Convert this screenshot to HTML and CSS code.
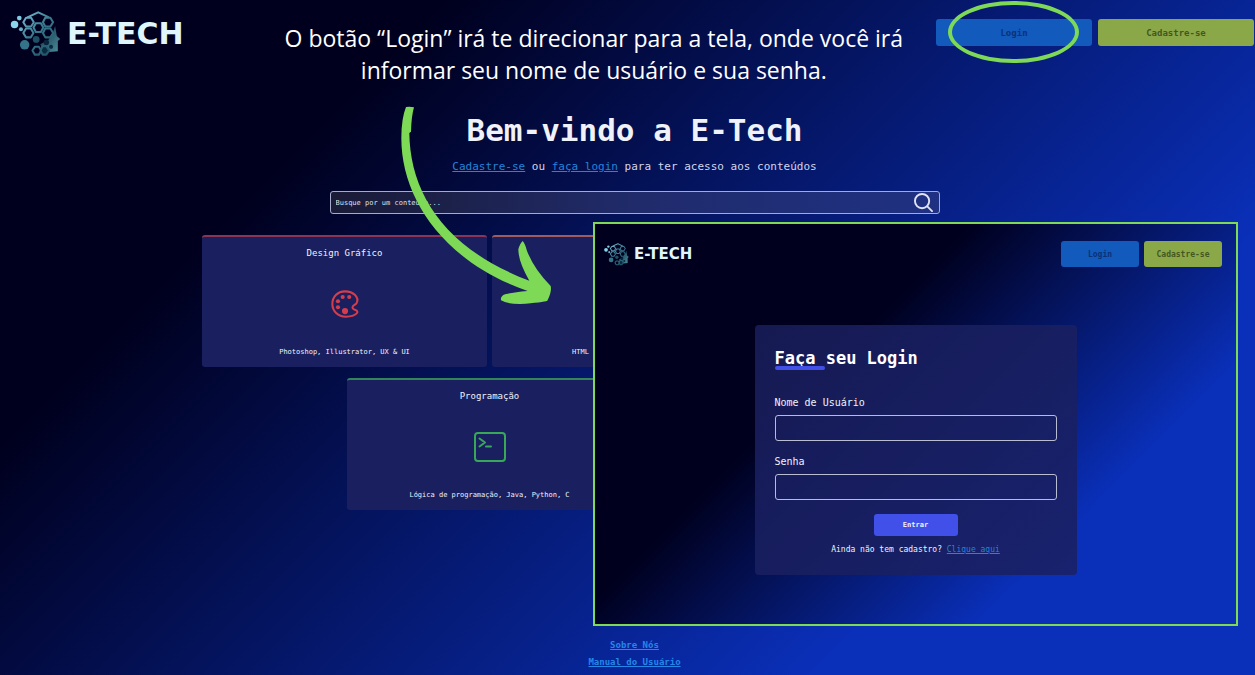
FILE: index.html
```html
<!DOCTYPE html>
<html lang="pt-BR">
<head>
<meta charset="utf-8">
<title>E-Tech</title>
<link rel="stylesheet" href="styles.css">
</head>
<body>
<svg class="defs" width="0" height="0" aria-hidden="true">
  <defs>
    <linearGradient id="teal" gradientUnits="userSpaceOnUse" x1="40" y1="30" x2="150" y2="140">
      <stop offset="0" stop-color="#7cc4dc"/><stop offset=".45" stop-color="#3b7b90"/><stop offset="1" stop-color="#1d5064"/>
    </linearGradient>
    <linearGradient id="face" x1="0" y1="0" x2="1" y2="1">
      <stop offset="0" stop-color="#0b2b40"/><stop offset="1" stop-color="#4f92a0"/>
    </linearGradient>
    <symbol id="brain" viewBox="16 18 148 136">
      <path d="M148 62L153 92L163 101L156 107L156 137L116 141L104 116L128 104L140 86Z" fill="url(#face)"/>
      <circle cx="122" cy="111" r="8" fill="#08233a"/>
      <circle cx="136" cy="124" r="6" fill="#0b2b40"/>
      <circle cx="28" cy="58" r="11" fill="#8bd6ec"/>
      <circle cx="42" cy="39" r="7" fill="#7fcbe2"/>
      <circle cx="47" cy="72" r="6" fill="#68aec4"/>
      <circle cx="58" cy="118" r="14" fill="#34748a"/>
      <circle cx="92" cy="102" r="10" fill="#1d5064"/>
      <g fill="none" stroke="url(#teal)" stroke-width="6" stroke-linejoin="round">
        <path d="M62 38H77L85 51L77 64H62L54 51Z"/>
        <path d="M91 54H106L113 67L106 80H91L84 67Z"/>
        <path d="M119 38H134L142 51L134 64H119L112 51Z"/>
        <path d="M62 70H76L84 83L76 96H62L54 83Z"/>
        <path d="M119 70H134L142 83L134 96H119L112 83Z"/>
        <path d="M66 37L98 22L130 37"/>
        <path d="M88 124H100L107 135L100 147H88L81 135Z"/>
        <path d="M111 122H122L130 135L122 147H111L105 135Z" fill="#0b2b40"/>
      </g>
    </symbol>
  </defs>
</svg>

<div class="page">
  <header class="header">
    <a class="logo" href="#"><svg class="logo-icon" aria-hidden="true"><use href="#brain"/></svg>E-TECH</a>
    <p class="note">O botão “Login” irá te direcionar para a tela, onde você irá informar seu nome de usuário e sua senha.</p>
    <nav class="actions">
      <div class="spot"><button class="btn btn-blue" type="button">Login</button><span class="ring"></span></div>
      <button class="btn btn-green" type="button">Cadastre-se</button>
    </nav>
  </header>

  <main class="main">
    <h1 class="title">Bem-vindo a E-Tech</h1>
    <p class="lead"><a href="#">Cadastre-se</a> ou <a href="#">faça login</a> para ter acesso aos conteúdos</p>
    <form class="search">
      <input class="search-input" type="text" placeholder="Busque por um conteúdo..." aria-label="Busque por um conteúdo">
      <svg class="search-icon" viewBox="0 0 20 20" aria-hidden="true"><circle cx="8.500" cy="8.500" r="7.500"/><path d="M14 14L19 19"/></svg>
    </form>
    <section class="cards">
      <article class="card red">
        <h2>Design Gráfico</h2>
        <svg class="card-icon" viewBox="0 0 32 32" aria-hidden="true">
          <path d="M16 2.500C8 2.500 2.500 8.500 2.500 16S8.500 29.500 17 29.500c5 0 9-1 11.500-3.500 1.500-1.500.5-3-1.500-3.600-2.600-.8-3.600-2.200-2.600-4 .8-1.400 3-1.600 4-3.400C31.500 9 25 2.500 16 2.500Z" fill="none" stroke="currentColor" stroke-width="2.200"/>
          <g fill="currentColor"><circle cx="13.500" cy="8.500" r="2.200"/><circle cx="20.500" cy="8.500" r="2.200"/><circle cx="8.500" cy="13" r="2.200"/><circle cx="8.500" cy="19.500" r="2.200"/><circle cx="16" cy="23.500" r="3.300"/></g>
        </svg>
        <p>Photoshop, Illustrator, UX &amp; UI</p>
      </article>
      <article class="card orange"><p class="start">HTML</p></article>
      <article class="card hidden"></article>
      <article class="card green">
        <h2>Programação</h2>
        <svg class="card-icon" viewBox="0 0 32 30" aria-hidden="true" fill="none" stroke="currentColor" stroke-width="2" stroke-linecap="round" stroke-linejoin="round"><rect x="1" y="1" width="30" height="28" rx="3"/><path d="M5.500 6.500L11 10.500L5.500 14.500M12 14.500H17"/></svg>
        <p>Lógica de programação, Java, Python, C</p>
      </article>
      <article class="card hidden"></article>
    </section>
  </main>

  <footer class="footer"><a href="#">Sobre Nós</a><a href="#">Manual do Usuário</a></footer>

  <section class="panel">
    <header class="panel-header">
      <a class="logo logo-small" href="#"><svg class="logo-icon" aria-hidden="true"><use href="#brain"/></svg>E-TECH</a>
      <nav class="actions actions-small">
        <button class="btn btn-blue" type="button">Login</button>
        <button class="btn btn-green" type="button">Cadastre-se</button>
      </nav>
    </header>
    <form class="login">
      <h2 class="login-title">Faça seu Login</h2>
      <label for="user">Nome de Usuário</label>
      <input id="user" type="text">
      <label for="pass">Senha</label>
      <input id="pass" type="password">
      <button class="enter" type="button">Entrar</button>
      <p>Ainda não tem cadastro? <a href="#">Clique aqui</a></p>
    </form>
  </section>

  <svg class="arrow" viewBox="0 0 570 660" aria-hidden="true"><path d="M78 36Q90 34 102 37Q94 65 93 110L88 114C90 290 190 460 448 557Q415 500 415 463Q420 445 428 438Q435 445 440 465Q460 520 512 573Q516 590 502 617Q490 622 420 627Q380 627 363 616Q360 602 378 597Q400 592 443 588C190 500 64 310 64 130Q64 70 78 36Z"/></svg>
</div>
</body>
</html>
```
FILE: styles.css
```css
* { box-sizing: border-box; }
body { margin: 0; background: #00001e; font-family: "DejaVu Sans Mono", monospace; color: #f0f2fa; }
h1, h2, p { margin: 0; }
button, input { font-family: inherit; color: inherit; margin: 0; }
a { color: #2484d8; }
.defs { position: absolute; }

.page {
  position: relative;
  min-height: 100vh;
  overflow: hidden;
  background: linear-gradient(135deg, #00001e 23%, #0a2fb8 77%);
}

.header { display: flex; align-items: flex-start; justify-content: space-between; padding: 11px 1px 0 10px; height: 58px; }
.logo {
  display: flex; align-items: center; gap: 6px;
  font: bold 30px/44px "DejaVu Sans", sans-serif;
  color: #dff6fd; text-decoration: none;
}
.logo-icon { width: 51px; height: 46px; }
.note { width: 640px; margin: 11px 0 0 68px; font: 23px/32px "Open Sans", "Noto Sans", sans-serif; color: #fff; text-align: center; }
.actions { display: flex; gap: 6px; padding-top: 8px; }
.btn { width: 156px; height: 27px; padding: 0; border: 0; border-radius: 3px; font-size: 9px; font-weight: bold; }
.btn-blue { background: #125abc; color: #0a3278; }
.btn-green { background: #8ba848; color: #435722; }
.spot { position: relative; display: flex; }
.ring { position: absolute; left: 12px; top: -18px; width: 131px; height: 62px; border: 4px solid #7ed957; border-radius: 50%; }

.main { display: flex; flex-direction: column; align-items: center; padding: 52px 0 0 14px; }
.title { font-size: 31px; line-height: 40px; }
.lead { margin-top: 9px; font-size: 11px; line-height: 16px; color: #d2d6ea; }
.search {
  display: flex; align-items: center;
  width: 610px; height: 23px; margin-top: 16px; padding: 0 6px 0 5px;
  border: 1px solid #a5abc9; border-radius: 3px;
  background: linear-gradient(90deg, #1a1b36, #202b6b 50%, #1f3183);
}
.search-input { flex: 1; min-width: 0; padding: 0; border: 0; outline: 0; background: none; font-size: 7px; }
.search-input::placeholder { color: #dde0ee; opacity: 1; }
.search-icon { width: 19px; height: 19px; fill: none; stroke: #dfe3f2; stroke-width: 2; stroke-linecap: round; }

.cards { display: flex; flex-wrap: wrap; justify-content: center; gap: 11px 5px; width: 866px; margin-top: 21px; }
.card {
  display: flex; flex-direction: column; align-items: center; justify-content: space-between;
  width: 285px; height: 132px; padding: 8px 0 9px;
  border-top: 2px solid #3b4a8c; border-radius: 3px;
  background: #1a205f;
}
.card h2 { font-size: 9px; line-height: 16px; font-weight: normal; }
.card p { font-size: 7px; line-height: 12px; }
.card .start { margin-top: auto; align-self: flex-start; padding-left: 80px; }
.card-icon { width: 32px; height: 30px; }
.hidden { visibility: hidden; }
.red { border-color: #8c3454; }
.orange { border-color: #a05c5c; }
.green { border-color: #338458; }
.red .card-icon { color: #d53d4b; }
.green .card-icon { color: #38a858; }

.footer { display: flex; flex-direction: column; align-items: center; padding: 127px 0 4px 14px; font-size: 9px; line-height: 17px; font-weight: bold; }
.footer a { color: #2586e8; }

.panel {
  position: absolute; left: 593px; top: 222px; width: 645px; padding: 17px 9px 49px;
  border: 2px solid #7ed957;
  background: linear-gradient(135deg, #00001e 36%, #0a2fb8 75%);
}
.panel-header { display: flex; align-items: center; justify-content: space-between; }
.logo-small { gap: 5px; font-size: 15px; line-height: 26px; }
.logo-small .logo-icon { width: 25px; height: 23px; }
.actions-small { gap: 5px; padding: 0 5px 0 0; }
.actions-small .btn { width: 78px; height: 26px; font-size: 8px; }

.login {
  display: flex; flex-direction: column; width: 322px; margin: 58px auto 0; padding: 21px 20px 18px;
  border-radius: 4px; background: linear-gradient(135deg, #161a52, #18226e);
}
.login-title { position: relative; margin-bottom: 26px; font-size: 17px; line-height: 24px; color: #fff; }
.login-title::after { content: ""; position: absolute; left: 0; bottom: 0; width: 50px; height: 4px; border-radius: 2px; background: #4250e8; }
.login label { font-size: 10px; line-height: 14px; }
.login input { height: 26px; margin: 5px 0 14px; padding: 0 6px; border: 1px solid #b9bdd2; border-radius: 3px; background: none; font-size: 10px; }
.enter { align-self: center; width: 84px; height: 22px; padding: 0; border: 0; border-radius: 3px; background: #4050e8; font-size: 7px; font-weight: bold; }
.login p { margin-top: 7px; font-size: 8px; line-height: 14px; text-align: center; }

.arrow { position: absolute; left: 380px; top: 95px; width: 190px; height: 220px; fill: #7ed957; }
```
